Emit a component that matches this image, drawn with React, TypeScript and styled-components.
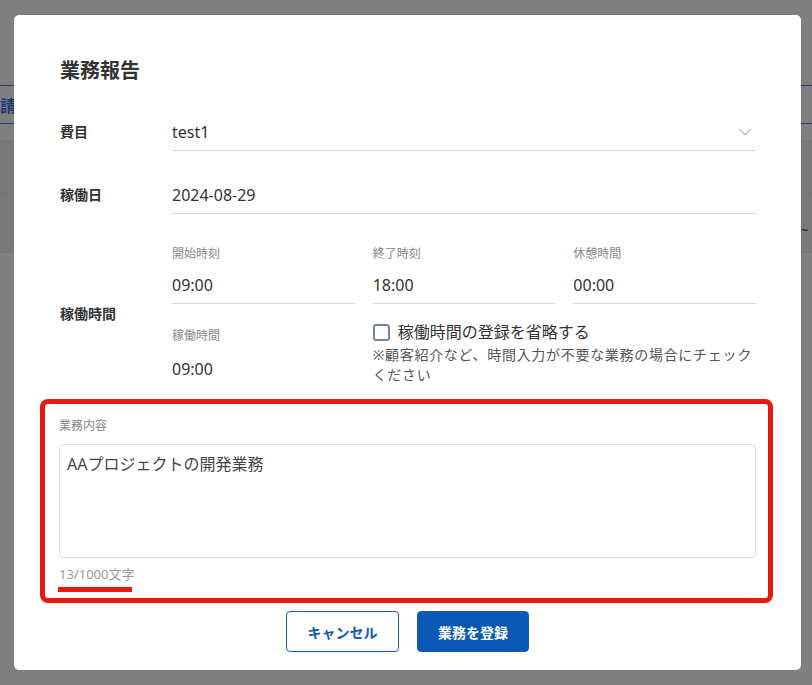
import React from "react"
import styled, { createGlobalStyle } from "styled-components"

const GlobalStyle = createGlobalStyle`
  html, body {
    margin: 0;
    padding: 0;
    background: #ffffff;
    font-family: "Noto Sans", "Noto Sans CJK JP", sans-serif;
    color: #333333;
  }
  * { box-sizing: border-box; }
`

// page behind the dialog
const BackPage = styled.div`
  width: 812px;
  height: 685px;
  padding-top: 85px;
  overflow: hidden;
`
const TabBar = styled.div`
  height: 39px;
  border-top: 1px solid rgb(56, 126, 244);
  border-bottom: 1px solid rgb(56, 126, 244);
  display: flex;
  align-items: center;
  font-size: 16px;
  font-weight: 700;
  color: rgb(50, 120, 240);
  white-space: nowrap;
`
const Band = styled.div`
  margin-top: 16px;
  background: #f1f1f1;
`
const BandRow = styled.div<{ $h: number }>`
  height: ${p => p.$h}px;
  border-bottom: 1px solid #e8e8e8;
  display: flex;
  align-items: center;
  justify-content: flex-end;
  padding: 16px 4px 0 0;
  font-size: 12px;
  color: #222;
`

const Overlay = styled.div`
  position: fixed;
  inset: 0;
  background: rgba(0, 0, 0, 0.5);
  padding: 15px 0 0 14px;
`
const Modal = styled.div`
  width: 787px;
  background: #ffffff;
  border-radius: 5px;
  padding: 42px 45px 18px 46px;
`
const Title = styled.h2`
  margin: 0;
  font-size: 20px;
  line-height: 28px;
  font-weight: 700;
  color: #333;
`
const FormRow = styled.div<{ $mt: number }>`
  display: grid;
  grid-template-columns: 112px 1fr;
  align-items: center;
  margin-top: ${p => p.$mt}px;
`
const RowLabel = styled.div<{ $shift?: number }>`
  font-size: 14px;
  font-weight: 700;
  color: #2f3437;
  line-height: 20px;
  margin-top: ${p => p.$shift || 0}px;
`
const Field = styled.div<{ $line?: boolean }>`
  display: flex;
  align-items: center;
  justify-content: space-between;
  padding: 8px 4px 6px 0;
  font-size: 16px;
  line-height: 24px;
  color: #333;
  border-bottom: 1px solid ${p => (p.$line === false ? "transparent" : "#d9d9d9")};
`
const TimeGrid = styled.div`
  display: grid;
  grid-template-columns: repeat(3, 1fr);
  column-gap: 18px;
  row-gap: 16px;
`
const TimeCell = styled.div<{ $pt?: number }>`
  display: flex;
  flex-direction: column;
  padding-top: ${p => p.$pt || 0}px;
`
const SmallLabel = styled.div`
  font-size: 12px;
  line-height: 18px;
  color: #888;
`
const CellField = styled(Field)<{ $mt: number }>`
  margin-top: ${p => p.$mt}px;
`
const CheckCell = styled.div`
  grid-column: 2 / 4;
`
const CheckRow = styled.label`
  display: flex;
  align-items: center;
  gap: 8px;
  font-size: 16px;
  line-height: 24px;
  color: #333;
`
const CheckBox = styled.span`
  width: 17px;
  height: 17px;
  border: 2px solid #74849c;
  border-radius: 3px;
  background: #fff;
`
const Note = styled.div`
  margin-top: 1px;
  font-size: 14px;
  line-height: 20px;
  letter-spacing: 0.7px;
  color: #555;
`
const Highlight = styled.div`
  margin: 11px -17px 0 -20px;
  border: 5px solid #e8190f;
  border-radius: 8px;
  padding: 13px 12px 6px 14px;
`
const TextBox = styled.div`
  margin-top: 9px;
  height: 114px;
  border: 1px solid #dedede;
  border-radius: 4px;
  padding: 7px 7px;
  font-size: 16px;
  line-height: 24px;
  color: #444;
`
const Counter = styled.div`
  margin-top: 7px;
  font-size: 13px;
  line-height: 18px;
  color: #999;
`
const CounterMark = styled.div`
  margin-top: 4px;
  width: 74px;
  height: 5px;
  margin-left: -1px;
  background: #e8190f;
`
const Buttons = styled.div`
  margin-top: 8px;
  padding-right: 1px;
  display: flex;
  justify-content: center;
  gap: 18px;
`
const Button = styled.button<{ $primary?: boolean }>`
  width: ${p => (p.$primary ? 112 : 113)}px;
  height: 41px;
  border-radius: 4px;
  font-family: inherit;
  font-size: 14px;
  font-weight: 700;
  border: 1px solid #1a5fb4;
  background: ${p => (p.$primary ? "#0a58b5" : "#ffffff")};
  color: ${p => (p.$primary ? "#ffffff" : "#1257b0")};
`

const Chevron = () => (
  <svg width="14" height="8" viewBox="0 0 14 8">
    <path d="M1 1 L7 6.5 L13 1" fill="none" stroke="#c4c4c4" strokeWidth="1.6" />
  </svg>
)

export default function App() {
  return (
    <>
      <GlobalStyle />
      <BackPage>
        <TabBar>請求書一覧</TabBar>
        <Band>
          <BandRow $h={53} />
          <BandRow $h={60}>~</BandRow>
        </Band>
      </BackPage>
      <Overlay>
        <Modal>
          <Title>業務報告</Title>
          <FormRow $mt={27}>
            <RowLabel>費目</RowLabel>
            <Field>
              <span>test1</span>
              <Chevron />
            </Field>
          </FormRow>
          <FormRow $mt={24}>
            <RowLabel>稼働日</RowLabel>
            <Field>2024-08-29</Field>
          </FormRow>
          <FormRow $mt={31}>
            <RowLabel $shift={-6}>稼働時間</RowLabel>
            <TimeGrid>
              <TimeCell>
                <SmallLabel>開始時刻</SmallLabel>
                <CellField $mt={2}>09:00</CellField>
              </TimeCell>
              <TimeCell>
                <SmallLabel>終了時刻</SmallLabel>
                <CellField $mt={2}>18:00</CellField>
              </TimeCell>
              <TimeCell>
                <SmallLabel>休憩時間</SmallLabel>
                <CellField $mt={2}>00:00</CellField>
              </TimeCell>
              <TimeCell $pt={7}>
                <SmallLabel>稼働時間</SmallLabel>
                <CellField $mt={4} $line={false}>09:00</CellField>
              </TimeCell>
              <CheckCell>
                <CheckRow>
                  <CheckBox />
                  稼働時間の登録を省略する
                </CheckRow>
                <Note>※顧客紹介など、時間入力が不要な業務の場合にチェックください</Note>
              </CheckCell>
            </TimeGrid>
          </FormRow>
          <Highlight>
            <SmallLabel>業務内容</SmallLabel>
            <TextBox>AAプロジェクトの開発業務</TextBox>
            <Counter>13/1000文字</Counter>
            <CounterMark />
          </Highlight>
          <Buttons>
            <Button>キャンセル</Button>
            <Button $primary>業務を登録</Button>
          </Buttons>
        </Modal>
      </Overlay>
    </>
  )
}
